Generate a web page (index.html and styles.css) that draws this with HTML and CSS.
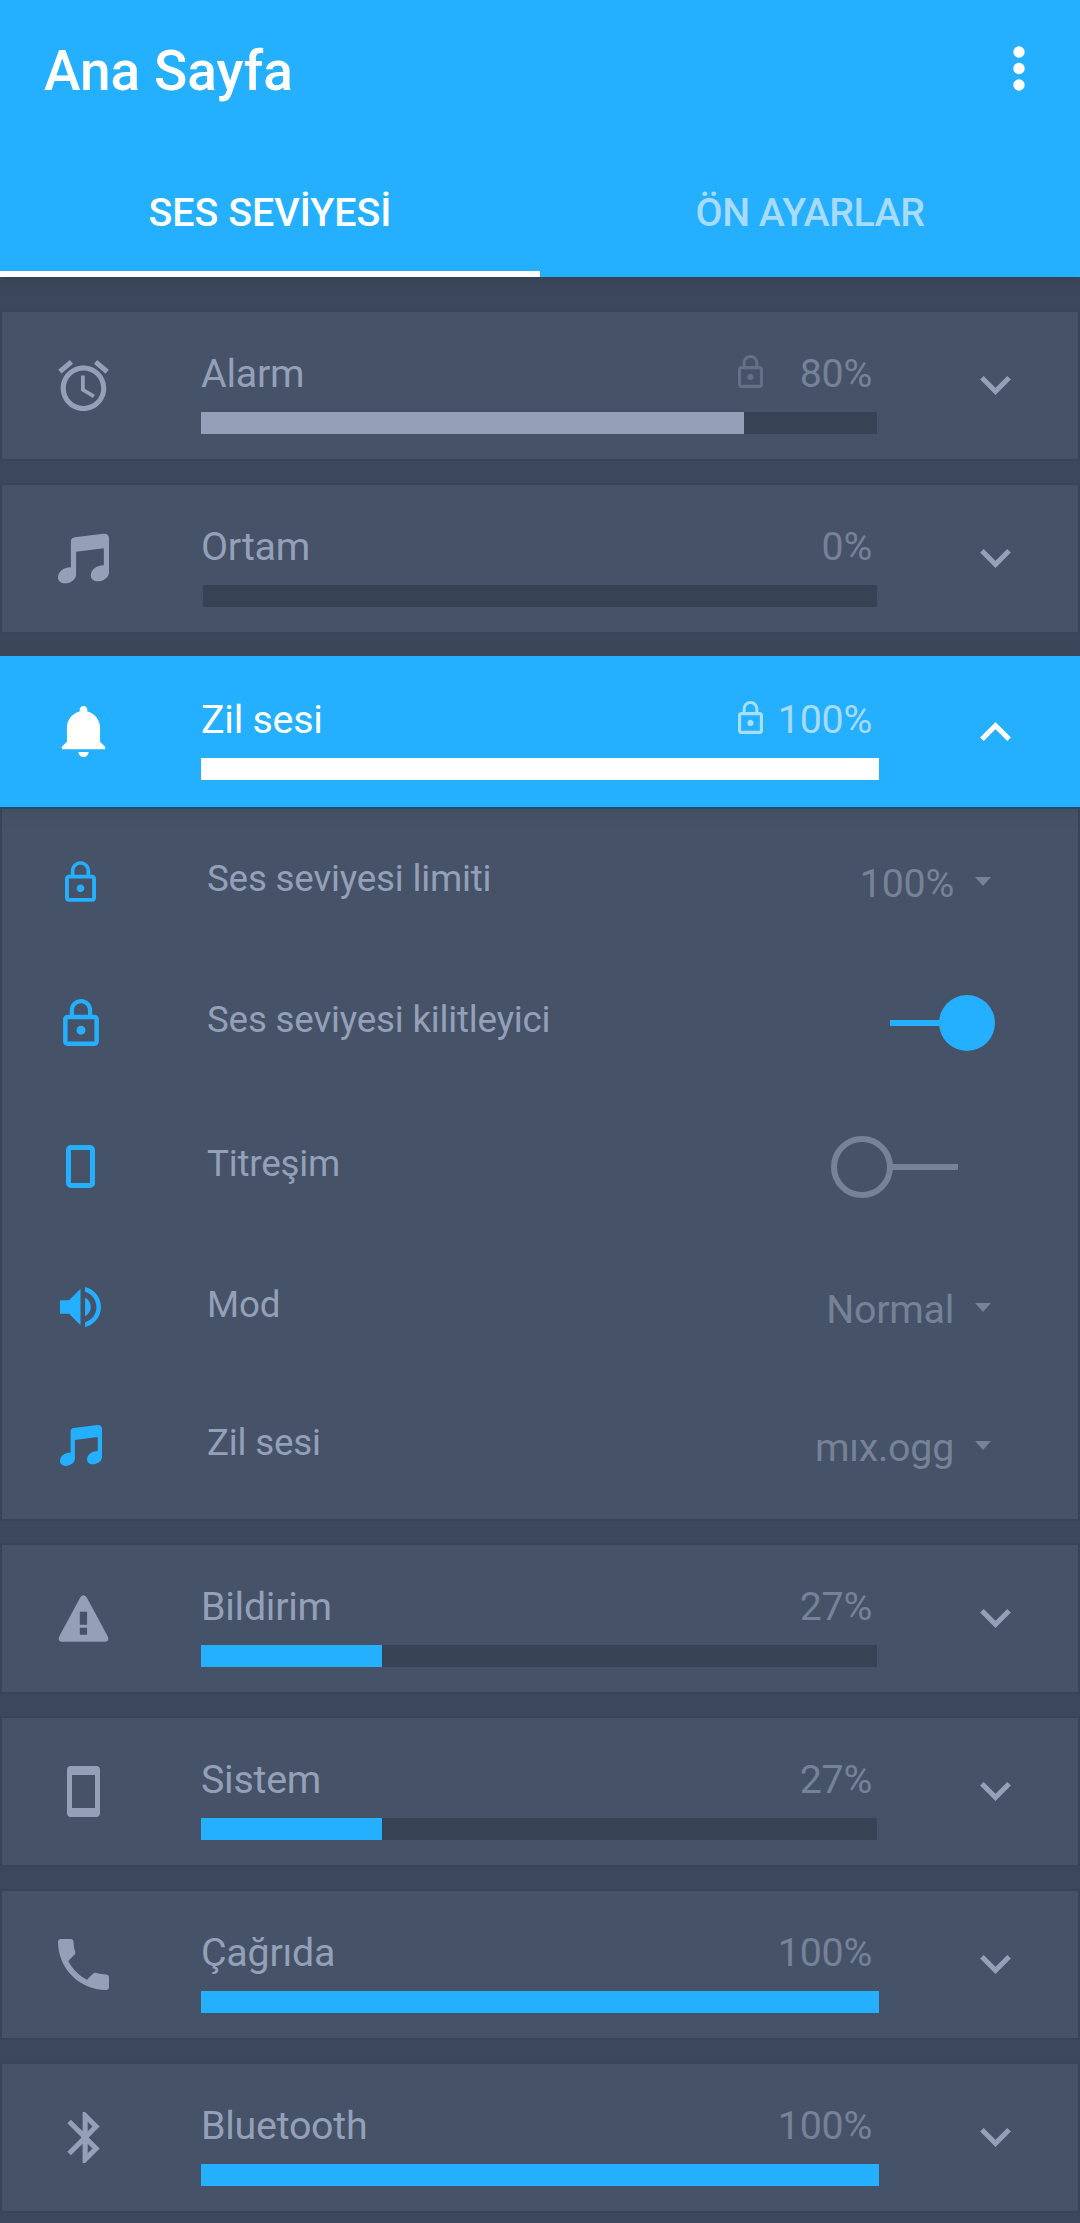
FILE: index.html
```html
<!DOCTYPE html>
<html lang="tr">
<head>
<meta charset="utf-8">
<title>Ana Sayfa</title>
<link rel="stylesheet" href="styles.css">
</head>
<body>
<svg class="sprite" aria-hidden="true">
  <symbol id="lock" viewBox="4 1 16 21"><path d="M12 17c1.1 0 2-.9 2-2s-.9-2-2-2-2 .9-2 2 .9 2 2 2zm6-9h-1V6c0-2.76-2.24-5-5-5S7 3.24 7 6v2H6c-1.1 0-2 .9-2 2v10c0 1.1.9 2 2 2h12c1.1 0 2-.9 2-2V10c0-1.1-.9-2-2-2zM8.9 6c0-1.71 1.39-3.1 3.1-3.1s3.1 1.39 3.1 3.1v2H8.9V6zM18 20H6V10h12v10z"/></symbol>
  <symbol id="down" viewBox="6 8.59 12 7.41"><path d="M16.59 8.59L12 13.17 7.41 8.59 6 10l6 6 6-6z"/></symbol>
  <symbol id="up" viewBox="6 8 12 7.41"><path d="M12 8l-6 6 1.41 1.41L12 10.83l4.59 4.58L18 14z"/></symbol>
  <symbol id="music" viewBox="0 0 51.3 50"><path d="M13 8Q13 4.2 17 3.7L45.5.1Q51.3-.3 51.3 5V39C51.3 44 45.5 48 40 48 36 48 33 45.500 33 42 33 36.500 38.500 31.700 46.100 31.700V14.700L18.200 18.300V41C18.200 46 12.500 50 7 50 3 50 0 47.500 0 44 0 38.500 5.500 33.700 13 33.700Z"/></symbol>
</svg>

<header class="appbar">
  <div class="toolbar">
    <h1 class="title">Ana Sayfa</h1>
    <svg class="more" viewBox="0 0 12 45"><circle cx="6" cy="6" r="5.700"/><circle cx="6" cy="22.500" r="5.700"/><circle cx="6" cy="39" r="5.700"/></svg>
  </div>
  <nav class="tabs">
    <div class="tab tab-active">SES SEVİYESİ</div>
    <div class="tab tab-presets">ÖN AYARLAR</div>
  </nav>
</header>

<main class="list">
  <section class="card">
    <div class="head">
      <svg class="icon" viewBox="2 1.86 20 20.14"><path d="M22 5.72l-4.6-3.86-1.29 1.53 4.6 3.86L22 5.72zM7.88 3.39L6.6 1.86 2 5.71l1.29 1.53 4.59-3.85zM12.5 8H11v6l4.75 2.85.75-1.23-4-2.37V8zM12 4c-4.97 0-9 4.03-9 9s4.02 9 9 9c4.97 0 9-4.03 9-9s-4.03-9-9-9zm0 16c-3.87 0-7-3.130-7-7s3.130-7 7-7 7 3.130 7 7-3.130 7-7 7z"/></svg>
      <div class="level">
        <div class="line"><span class="name">Alarm</span><svg class="lock"><use href="#lock"/></svg><span class="pct">80%</span></div>
        <div class="bar"><div class="fill fill-muted" style="width:80.1%"></div></div>
      </div>
      <svg class="chev"><use href="#down"/></svg>
    </div>
  </section>

  <section class="card">
    <div class="head">
      <svg class="icon"><use href="#music"/></svg>
      <div class="level">
        <div class="line"><span class="name">Ortam</span><span class="pct">0%</span></div>
        <div class="bar"></div>
      </div>
      <svg class="chev"><use href="#down"/></svg>
    </div>
  </section>

  <section class="card card-open">
    <div class="head">
      <svg class="icon" viewBox="3 2 17 20"><path d="M11.5 22c1.1 0 2-.9 2-2h-4c0 1.100.9 2 2 2zm6.500-6v-5.500c0-3.070-2.130-5.640-5-6.320V3.500c0-.83-.67-1.500-1.500-1.500S10 2.670 10 3.500v.68c-2.870.68-5 3.250-5 6.320V16l-2 2v1h17v-1l-2-2z"/></svg>
      <div class="level">
        <div class="line"><span class="name">Zil sesi</span><svg class="lock"><use href="#lock"/></svg><span class="pct">100%</span></div>
        <div class="bar"><div class="fill" style="width:100%"></div></div>
      </div>
      <svg class="chev"><use href="#up"/></svg>
    </div>
    <div class="details">
      <div class="row">
        <div class="slot"><svg class="i-lock-s"><use href="#lock"/></svg></div>
        <span class="label">Ses seviyesi limiti</span>
        <span class="value">100%</span><i class="caret"></i>
      </div>
      <div class="row row-switch">
        <div class="slot"><svg class="i-lock"><use href="#lock"/></svg></div>
        <span class="label">Ses seviyesi kilitleyici</span>
        <div class="switch switch-on"><span class="rail"></span><span class="knob"></span></div>
      </div>
      <div class="row row-vibrate">
        <div class="slot"><span class="i-device"></span></div>
        <span class="label">Titreşim</span>
        <div class="switch switch-off"><span class="knob"></span><span class="rail"></span></div>
      </div>
      <div class="row row-mode">
        <div class="slot"><svg class="i-volume" viewBox="3 3.23 18 17.54"><path d="M3 9v6h4l5 5V4L7 9H3zm13.500 3c0-1.770-1.020-3.290-2.500-4.030v8.050c1.480-.73 2.500-2.250 2.500-4.020zM14 3.230v2.060c2.890.86 5 3.540 5 6.710s-2.110 5.850-5 6.710v2.060c4.010-.91 7-4.490 7-8.770s-2.990-7.860-7-8.770z"/></svg></div>
        <span class="label">Mod</span>
        <span class="value">Normal</span><i class="caret"></i>
      </div>
      <div class="row">
        <div class="slot"><svg class="i-music"><use href="#music"/></svg></div>
        <span class="label">Zil sesi</span>
        <span class="value">mıx.ogg</span><i class="caret"></i>
      </div>
    </div>
  </section>

  <section class="card">
    <div class="head">
      <svg class="icon" viewBox="-.5 -2.100 51 51"><path fill-rule="evenodd" d="M22 1.800Q25-1.700 28 1.800L49.300 41.500Q51 46.500 46.500 46.600H3.500Q-1 46.500.7 41.500ZM21.300 16.700V29.700H28.600V16.700ZM21.300 32.700V39.700H28.600V32.700Z"/></svg>
      <div class="level">
        <div class="line"><span class="name">Bildirim</span><span class="pct">27%</span></div>
        <div class="bar"><div class="fill" style="width:26.7%"></div></div>
      </div>
      <svg class="chev"><use href="#down"/></svg>
    </div>
  </section>

  <section class="card">
    <div class="head">
      <svg class="icon" viewBox="0 0 51 51"><path fill-rule="evenodd" d="M13 0H38Q42 0 42 4V47Q42 51 38 51H13Q9 51 9 47V4Q9 0 13 0ZM14 9V42H37V9Z"/></svg>
      <div class="level">
        <div class="line"><span class="name">Sistem</span><span class="pct">27%</span></div>
        <div class="bar"><div class="fill" style="width:26.7%"></div></div>
      </div>
      <svg class="chev"><use href="#down"/></svg>
    </div>
  </section>

  <section class="card">
    <div class="head">
      <svg class="icon" viewBox="3 3 18 18"><path d="M6.620 10.790c1.440 2.830 3.760 5.140 6.590 6.590l2.200-2.200c.27-.27.67-.36 1.020-.24 1.120.37 2.330.57 3.570.57.55 0 1 .45 1 1V20c0 .55-.45 1-1 1-9.390 0-17-7.610-17-17 0-.55.45-1 1-1h3.500c.55 0 1 .45 1 1 0 1.250.2 2.450.57 3.570.11.35.03.74-.25 1.020l-2.200 2.200z"/></svg>
      <div class="level">
        <div class="line"><span class="name">Çağrıda</span><span class="pct">100%</span></div>
        <div class="bar"><div class="fill" style="width:100%"></div></div>
      </div>
      <svg class="chev"><use href="#down"/></svg>
    </div>
  </section>

  <section class="card">
    <div class="head">
      <svg class="icon" viewBox="5 2 12.710 20"><path d="M17.710 7.710L12 2h-1v7.590L6.410 5 5 6.410 10.590 12 5 17.590 6.410 19 11 14.410V22h1l5.710-5.710-4.300-4.290 4.300-4.290zM13 5.830l1.880 1.880L13 9.590V5.830zm1.880 10.460L13 18.170v-3.760l1.880 1.880z"/></svg>
      <div class="level">
        <div class="line"><span class="name">Bluetooth</span><span class="pct">100%</span></div>
        <div class="bar"><div class="fill" style="width:100%"></div></div>
      </div>
      <svg class="chev"><use href="#down"/></svg>
    </div>
  </section>
</main>
</body>
</html>
```
FILE: styles.css
```css
:root {
  --blue: #25afff;
  --bg: #3c475b;
  --card: #465268;
  --edge: #394456;
  --track: #374254;
  --muted: #94a0b8;
  --value: #768296;
}

* { box-sizing: border-box; }

body {
  margin: 0;
  min-height: 2223px;
  background: var(--bg);
  color: var(--muted);
  font: 39.375px/46px Roboto, sans-serif;
}

svg { display: block; fill: currentColor; flex: none; }

.sprite { position: absolute; width: 0; height: 0; }

/* App bar */
.appbar {
  height: 277px;
  background: var(--blue);
  color: #fff;
  box-shadow: 0 2px 10px rgba(45, 60, 75, .6);
}

.toolbar {
  display: flex;
  justify-content: space-between;
  height: 147px;
  padding: 39px 55px 0 44px;
}

.title { margin: 0; font-size: 55px; line-height: 64px; font-weight: 500; }

.more { width: 12px; height: 45px; margin-top: 6.5px; }

.tabs { display: grid; grid-template-columns: 1fr 1fr; height: 130px; }

.tab {
  padding-top: 43px;
  text-align: center;
  font-size: 39.375px;
  font-weight: 500;
  color: #a7dbff;
}

.tab-active { color: #fff; border-bottom: 6px solid #fff; }
.tab-presets { letter-spacing: -.5px; }

/* Volume cards */
.list { display: flex; flex-direction: column; gap: 22px; padding-top: 33px; }

.card { background: var(--card); border: 2px solid var(--edge); }

.head { display: flex; height: 147px; padding: 0 67px 0 56px; }

.icon { width: 51px; height: 51px; margin-top: 48px; }

.level { width: 678px; margin-left: 92px; padding-top: 39px; }

.line { display: flex; height: 61px; letter-spacing: -.25px; }

.name { flex: 1; }

.lock { width: 25px; height: 33px; margin-top: 4px; color: #647087; }

.pct { width: 109px; margin-right: 7px; text-align: right; color: var(--value); }

.bar {
  height: 22px;
  background: linear-gradient(var(--track), var(--track)) center / 674px 22px no-repeat;
}

.fill { height: 22px; background: var(--blue); }
.fill-muted { background: var(--muted); }

.chev { width: 31px; height: 19px; margin: 64px 0 0 101px; }

/* Expanded card */
.card-open { border-top: 0; }

.card-open .head {
  height: 153px;
  margin: 0 -2px;
  padding: 2px 69px 0 58px;
  background: var(--blue);
  color: #fff;
  border-bottom: 2px solid #24496a;
  box-shadow: 0 2px 10px rgba(60, 70, 80, .5);
}

.card-open .pct { color: #a7dbff; }
.card-open .lock { color: #a5e0fa; }
.card-open .head .fill { background: #fff; }

.details { padding: 3px 0 5px; }

.row { display: flex; align-items: center; height: 138px; padding-right: 87px; }

.row-switch { margin-top: 3px; }
.row-vibrate { margin-top: 6px; }
.row-mode { margin-top: 3px; }

.slot {
  display: flex;
  justify-content: center;
  width: 157px;
  margin-right: 48px;
  color: var(--blue);
}

.i-lock-s { width: 31px; height: 41px; }
.i-lock { width: 36px; height: 47px; }
.i-volume { width: 41px; height: 40px; margin-left: -1px; }
.i-music { width: 42px; height: 41px; }
.i-device { width: 29px; height: 43px; border: 5px solid; border-radius: 5px; }

.label {
  flex: 1;
  padding-bottom: 4px;
  font-size: 36.75px;
  line-height: 44px;
  letter-spacing: -.2px;
}

.value {
  padding-top: 5px;
  margin-right: 21px;
  letter-spacing: -.25px;
  color: var(--value);
}

.caret { border: solid transparent; border-width: 9px 8.5px 0; border-top-color: var(--value); }

.switch { display: flex; align-items: center; padding-top: 2px; }
.switch .rail { height: 6px; background: currentColor; }
.switch-on { color: var(--blue); margin-right: -4px; }
.switch-on .rail { width: 51px; margin-right: -2px; }
.switch-on .knob { width: 56px; height: 56px; border-radius: 50%; background: currentColor; }
.switch-off { color: var(--value); margin-right: 33px; }
.switch-off .rail { width: 66px; margin-left: -1px; }
.switch-off .knob { width: 62px; height: 62px; border: 6px solid; border-radius: 50%; }
```
